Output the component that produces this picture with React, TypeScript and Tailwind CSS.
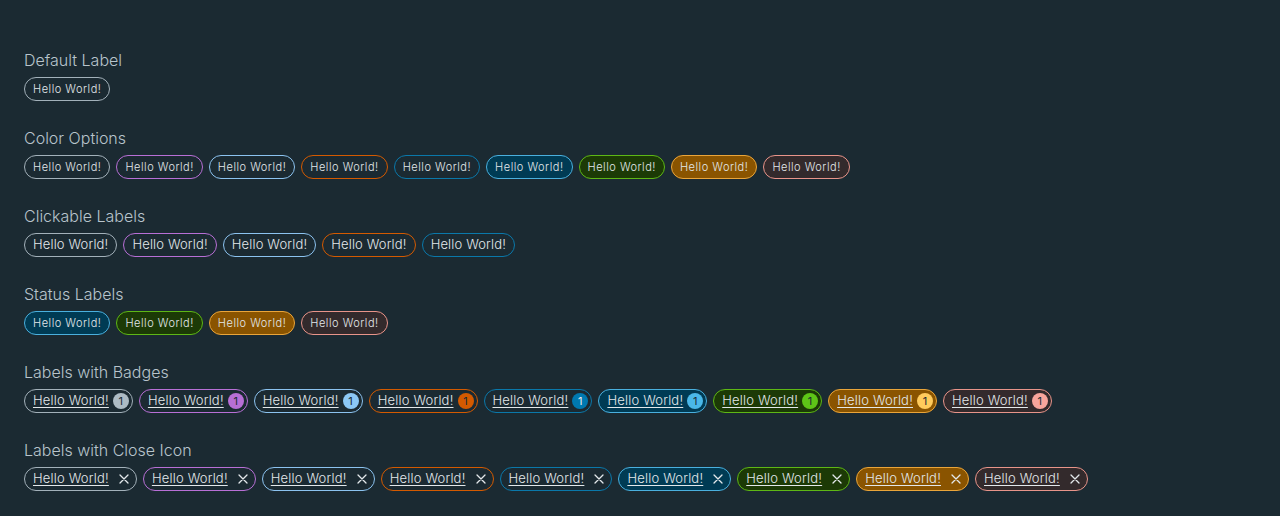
import React from "react";

type Variant = {
  border: string;
  bg: string;
  badge: string;
  badgeText: string;
};

const V: Record<string, Variant> = {
  default: { border: "border-[#a3b1ba]", bg: "bg-transparent", badge: "bg-[#adbbc4]", badgeText: "text-[#1b2a32]" },
  purple: { border: "border-[#b86fd6]", bg: "bg-transparent", badge: "bg-[#b86fd6]", badgeText: "text-[#1b2a32]" },
  blue: { border: "border-[#8cc3f0]", bg: "bg-transparent", badge: "bg-[#8cc8f5]", badgeText: "text-[#1b2a32]" },
  orange: { border: "border-[#d45a00]", bg: "bg-transparent", badge: "bg-[#d45a00]", badgeText: "text-[#1b2a32]" },
  lightblue: { border: "border-[#0a78aa]", bg: "bg-transparent", badge: "bg-[#0079b0]", badgeText: "text-[#e9ecef]" },
  info: { border: "border-[#4ab0de]", bg: "bg-[#003b54]", badge: "bg-[#4ab8e8]", badgeText: "text-[#1b2a32]" },
  success: { border: "border-[#5eb715]", bg: "bg-[#1c3a06]", badge: "bg-[#5ec517]", badgeText: "text-[#1b2a32]" },
  warning: { border: "border-[#eaa53a]", bg: "bg-[#8a5400]", badge: "bg-[#ffcb5c]", badgeText: "text-[#1b2a32]" },
  danger: { border: "border-[#e8948a]", bg: "bg-[#332a2c]", badge: "bg-[#f8a59c]", badgeText: "text-[#1b2a32]" },
};

const all = ["default", "purple", "blue", "orange", "lightblue", "info", "success", "warning", "danger"];
const clickable = ["default", "purple", "blue", "orange", "lightblue"];
const status = ["info", "success", "warning", "danger"];

const font = { fontFamily: "Inter, 'Noto Sans', sans-serif" };

function Label({ v, size = "sm" }: { v: string; size?: "sm" | "md" }) {
  const c = V[v];
  return (
    <span
      className={`inline-flex h-6 items-center rounded-full border ${c.border} ${c.bg} px-2 text-[#e3e8eb] font-light ${
        size === "sm" ? "text-[11px] tracking-[0.047em]" : "text-[13px] tracking-[0.012em]"
      }`}
    >
      Hello World!
    </span>
  );
}

function BadgeLabel({ v }: { v: string }) {
  const c = V[v];
  return (
    <span className={`inline-flex h-6 items-center rounded-full border ${c.border} ${c.bg} pl-2 pr-[3px] text-[13px] tracking-[0.015em] font-light text-[#e3e8eb]`}>
      <span className="underline underline-offset-2">Hello World!</span>
      <span className={`ml-[4px] flex h-4 w-4 items-center justify-center rounded-full text-[11px] font-normal ${c.badge} ${c.badgeText}`}>1</span>
    </span>
  );
}

function CloseLabel({ v }: { v: string }) {
  const c = V[v];
  return (
    <span className={`inline-flex h-6 items-center rounded-full border ${c.border} ${c.bg} pl-2 pr-[6px] text-[13px] tracking-[0.015em] font-light text-[#e3e8eb]`}>
      <span className="underline underline-offset-2">Hello World!</span>
      <svg className="ml-[9px]" width="12" height="12" viewBox="0 0 12 12" fill="none" stroke="#e3e8eb" strokeWidth="1.3" strokeLinecap="round">
        <path d="M2 2 L10 10 M10 2 L2 10" />
      </svg>
    </span>
  );
}

function Section({ title, children }: { title: string; children: React.ReactNode }) {
  return (
    <div className="mb-[25px]">
      <div className="h-6 text-[16px] leading-6 text-[#b8c4cc] font-light">{title}</div>
      <div className="mt-[5px] flex gap-[6px]">{children}</div>
    </div>
  );
}

export default function App() {
  return (
    <div className="min-h-[516px] w-full bg-[#1b2a32] px-6 pt-12" style={font}>
      <Section title="Default Label">
        <Label v="default" />
      </Section>
      <Section title="Color Options">
        {all.map((v) => (
          <Label key={v} v={v} />
        ))}
      </Section>
      <Section title="Clickable Labels">
        {clickable.map((v) => (
          <Label key={v} v={v} size="md" />
        ))}
      </Section>
      <Section title="Status Labels">
        {status.map((v) => (
          <Label key={v} v={v} />
        ))}
      </Section>
      <Section title="Labels with Badges">
        {all.map((v) => (
          <BadgeLabel key={v} v={v} />
        ))}
      </Section>
      <Section title="Labels with Close Icon">
        {all.map((v) => (
          <CloseLabel key={v} v={v} />
        ))}
      </Section>
    </div>
  );
}
